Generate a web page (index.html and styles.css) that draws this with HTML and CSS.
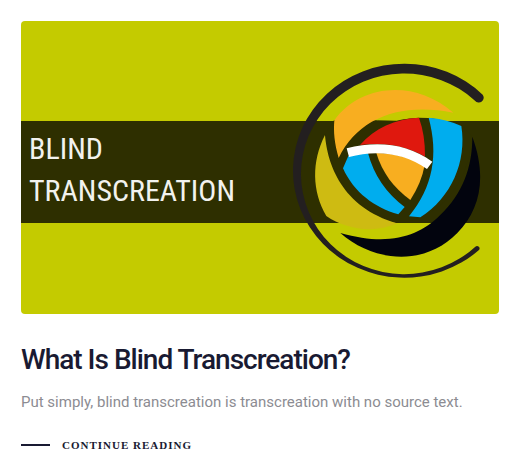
FILE: index.html
```html
<!DOCTYPE html>
<html lang="en">
<head>
<meta charset="utf-8">
<meta name="viewport" content="width=device-width, initial-scale=1">
<title>What Is Blind Transcreation?</title>
<link rel="stylesheet" href="styles.css">
</head>
<body>
<article class="post">
  <div class="cover">
    <svg class="cover-art" viewBox="0 0 478 293" aria-hidden="true">
      <rect class="lime" width="478" height="293"/>
      <rect class="band" y="100" width="478" height="102"/>
      <g transform="translate(259 29) scale(.33333)">
        <path class="ring" d="M608 134A334 321 0 1 0 596 601A7 7 0 0 0 586 590A310 301 0 1 1 585 152A14 14 0 0 0 608 134Z"/>
        <path class="olive" d="M135 255C142 340 184 472 352 520C280 552 195 537 139 498C96 424 94 335 135 255Z"/>
        <path class="shade" d="M577 260C568 380 495 507 352 519L334 512C240 482 146 396 137 250L162 211L290 211L410 190L548 229Z"/>
        <path class="lime" d="M290 211C330 188 370 178 420 177C452 178 490 181 522 189L550 211H500L446 204L417 203C388 204 367 208 350 212Z"/>
        <path class="amber" d="M163 211C240 105 400 85 520 188C360 156 234 204 176 324C163 280 160 245 163 211Z"/>
        <path class="navy" d="M577 260C622 382 600 480 532 549C430 653 278 634 181 549C325 590 416 560 480 496C548 430 577 353 577 260Z"/>
        <path class="red" d="M240 285C285 233 344 207 417 203Q436 256 435 320C380 288 312 275 240 285Z"/>
        <path class="blue" d="M446 203Q499 207 544 228C561 335 514 443 421 502L387 499C459 410 476 315 446 203Z"/>
        <path class="blue" d="M205 318L264 309Q290 408 374 471L355 493C285 474 221 427 189 355Z"/>
        <path class="amber" d="M289 309C340 309 392 322 434 346Q424 400 391 450C341 414 307 368 289 309Z"/>
        <path class="white" d="M200 295C292 271 383 281 457 335L441 357C372 308 288 299 207 321Z"/>
      </g>
    </svg>
    <p class="cover-title">BLIND<br>TRANSCREATION</p>
  </div>
  <h2 class="title">What Is Blind Transcreation?</h2>
  <p class="excerpt">Put simply, blind transcreation is transcreation with no source text.</p>
  <a class="more" href="#">CONTINUE READING</a>
</article>
</body>
</html>
```
FILE: styles.css
```css
body {
  margin: 0;
  background: #fff;
  font-family: Roboto, "Liberation Sans", sans-serif;
}

.post {
  padding: 21px 26px 0 21px;
}

.cover {
  position: relative;
  overflow: hidden;
  border-radius: 4px;
}

.cover-art {
  display: block;
  width: 100%;
  height: auto;
}

.lime { fill: #c4cb00; }
.band, .shade { fill: #2e2f00; }
.ring { fill: #231f20; }
.olive { fill: #cebb12; }
.amber { fill: #f8ae20; }
.navy { fill: #02040e; }
.red { fill: #df180e; }
.blue { fill: #00adee; }
.white { fill: #fff; }

.cover-title {
  position: absolute;
  top: 107px;
  left: 8px;
  margin: 0;
  color: #f2f2ee;
  font-family: "Liberation Sans Narrow", "Roboto Condensed", Roboto, sans-serif;
  font-size: 30px;
  line-height: 42px;
}

.title {
  margin: 28px 0 0;
  color: #191a32;
  font-size: 28px;
  font-weight: 500;
  line-height: 36px;
  letter-spacing: -1px;
}

.excerpt {
  margin: 12px 0 0;
  color: #8c8c92;
  font-size: 15px;
  font-weight: 400;
  line-height: 24px;
}

.more {
  display: flex;
  align-items: center;
  gap: 12px;
  margin-top: 22px;
  color: #191a32;
  font-family: "Liberation Serif", serif;
  font-size: 11px;
  font-weight: 700;
  line-height: 18px;
  letter-spacing: 1px;
  text-decoration: none;
}

.more::before {
  content: "";
  width: 29px;
  height: 2px;
  background: #191a32;
}
```
